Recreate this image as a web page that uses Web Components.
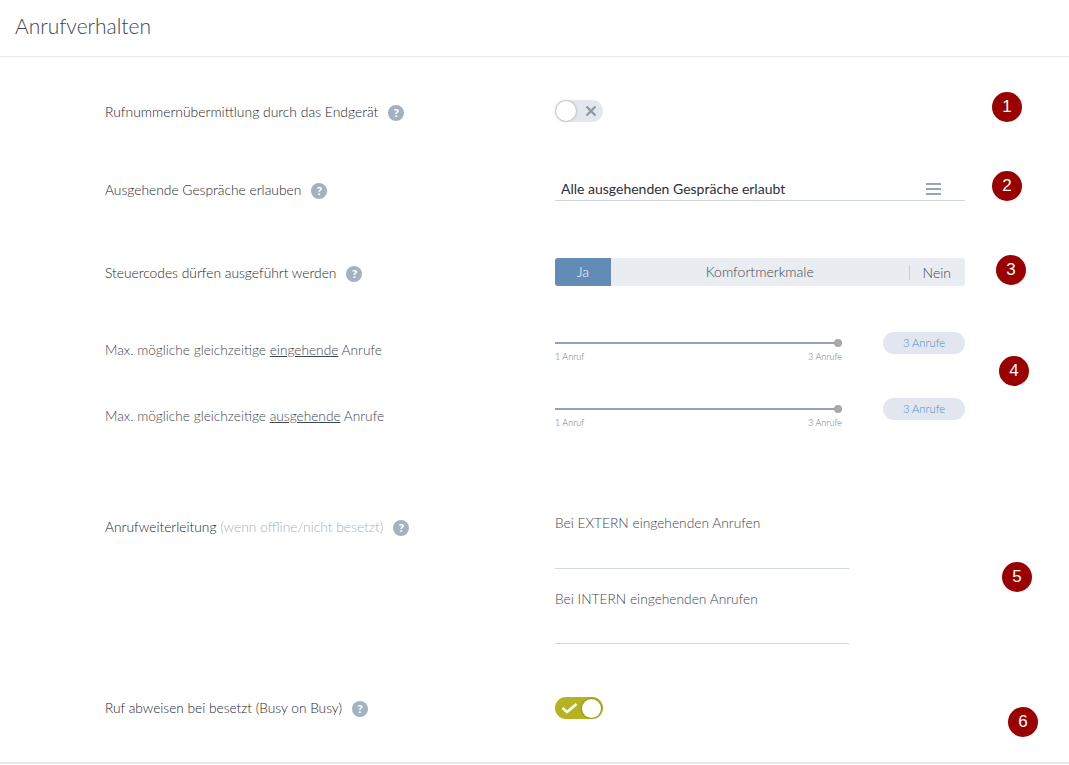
<!DOCTYPE html>
<html lang="de">
<head>
<meta charset="utf-8">
<title>Anrufverhalten</title>
<style>
  html, body { margin: 0; background: #fff; }
  body { font-family: Lato, "Liberation Sans", sans-serif; font-weight: 300; color: #3c4650; height: 765px; overflow: hidden; }
</style>
</head>
<body>
<settings-page>
  <span slot="title">Anrufverhalten</span>

  <call-row style="--top:43px;--height:22px;--label-top:4px;--size:13.9px">
    <span slot="label">Rufnummernübermittlung durch das Endgerät</span>
    <help-icon slot="label"></help-icon>
    <toggle-switch></toggle-switch>
  </call-row>

  <call-row style="--top:56px;--height:23px;--label-top:4px">
    <span slot="label">Ausgehende Gespräche erlauben</span>
    <help-icon slot="label"></help-icon>
    <select-field>Alle ausgehenden Gespräche erlaubt</select-field>
  </call-row>

  <call-row style="--top:57px;--height:28px;--label-top:7px">
    <span slot="label">Steuercodes dürfen ausgeführt werden</span>
    <help-icon slot="label"></help-icon>
    <segment-switch first="Ja" middle="Komfortmerkmale" last="Nein"></segment-switch>
  </call-row>

  <call-row muted style="--top:46px;--height:32px;--label-top:10px;--size:13.7px">
    <span slot="label">Max. mögliche gleichzeitige <u>eingehende</u> Anrufe</span>
    <range-slider></range-slider>
  </call-row>

  <call-row muted style="--top:34px;--height:32px;--label-top:10px;--size:13.7px">
    <span slot="label">Max. mögliche gleichzeitige <u>ausgehende</u> Anrufe</span>
    <range-slider></range-slider>
  </call-row>

  <call-row style="--top:85px;--height:159px;--label-top:4px">
    <span slot="label">Anrufweiterleitung <small style="font-size:inherit;color:#a9b0b6">(wenn offline/nicht besetzt)</small></span>
    <help-icon slot="label"></help-icon>
    <text-field>Bei EXTERN eingehenden Anrufen</text-field>
    <text-field>Bei INTERN eingehenden Anrufen</text-field>
  </call-row>

  <call-row style="--top:23px;--height:22px;--label-top:3px;--size:13.7px">
    <span slot="label">Ruf abweisen bei besetzt (Busy on Busy)</span>
    <help-icon slot="label"></help-icon>
    <toggle-switch checked></toggle-switch>
  </call-row>

  <note-marker style="left:992px;top:92px">1</note-marker>
  <note-marker style="left:992px;top:171px">2</note-marker>
  <note-marker style="left:996px;top:255px">3</note-marker>
  <note-marker style="left:999px;top:356px">4</note-marker>
  <note-marker style="left:1002px;top:562px">5</note-marker>
  <note-marker style="left:1008px;top:707px">6</note-marker>
</settings-page>

<script>
class SettingsPage extends HTMLElement {
    constructor() {
        super();
        this.attachShadow({ mode: 'open' });
        this.shadowRoot.innerHTML = `
            <style>
                :host { display: block; position: relative; height: 764px; box-sizing: border-box; border-bottom: 2px solid #e6e8ea; }
                header { height: 57px; box-sizing: border-box; padding: 13px 15px 0; border-bottom: 1px solid #e9ebed; font-size: 21px; line-height: 26px; color: #3c4650; }
            </style>
            <header><slot name="title"></slot></header>
            <slot></slot>
        `;
    }
}

class CallRow extends HTMLElement {
    constructor() {
        super();
        this.attachShadow({ mode: 'open' });
        this.shadowRoot.innerHTML = `
            <style>
                :host { display: grid; grid-template-columns: 450px 410px; padding: var(--top) 0 0 105px; font-size: var(--size, 13.8px); line-height: 16px; color: #1e252b; }
                :host([muted]) { color: #3e4750; }
                .label { padding-top: var(--label-top); display: flex; align-items: flex-start; gap: 10px; height: fit-content; }
                .control { min-height: var(--height); display: block; }
            </style>
            <div class="label"><slot name="label"></slot></div>
            <div class="control"><slot></slot></div>
        `;
    }
}

class HelpIcon extends HTMLElement {
    constructor() {
        super();
        this.attachShadow({ mode: 'open' });
        this.shadowRoot.innerHTML = `
            <style>
                :host { display: block; width: 16px; height: 16px; margin-top: 1px; border-radius: 50%; background: #a3b2bf; color: #fff; font: 900 12px/16px Lato, sans-serif; text-align: center; }
            </style>
            ?
        `;
    }
}

class ToggleSwitch extends HTMLElement {
    constructor() {
        super();
        this.attachShadow({ mode: 'open' });
        const on = this.hasAttribute('checked');
        this.shadowRoot.innerHTML = `
            <style>
                :host { display: flex; align-items: center; justify-content: space-between; width: 48px; height: 22px; box-sizing: border-box; padding: 0 1px; border-radius: 11px; background: #e3e7ee; }
                :host([checked]) { background: #b5b31f; padding: 0 2px 0 3px; }
                :host([checked]) .thumb { width: 19px; height: 19px; }
                :host([checked]) svg { width: 17px; margin: 0 0 0 3px; }
                .thumb { width: 20px; height: 20px; border-radius: 50%; background: #fff; box-shadow: 0 0 3px rgba(0,0,0,.35); }
                svg { width: 14px; height: 14px; margin: 0 4px; }
            </style>
            ${on
                ? `<svg viewBox="0 0 17 14"><path d="M1.5 7 6 11 15.5 3" fill="none" stroke="#fff" stroke-width="2.6"/></svg><div class="thumb"></div>`
                : `<div class="thumb"></div><svg viewBox="0 0 14 14"><path d="M2.5 2.5 11.5 11.5M11.5 2.5 2.5 11.5" fill="none" stroke="#8f979e" stroke-width="2.2"/></svg>`}
        `;
    }
}

class SelectField extends HTMLElement {
    constructor() {
        super();
        this.attachShadow({ mode: 'open' });
        this.shadowRoot.innerHTML = `
            <style>
                :host { display: flex; align-items: center; justify-content: space-between; height: 23px; box-sizing: border-box; padding: 0 24px 0 6px; border-bottom: 1px solid #cfd6da; font-size: 14px; font-weight: 400; color: #2a3036; }
                svg { width: 15px; height: 12px; }
            </style>
            <slot></slot>
            <svg viewBox="0 0 15 12"><path d="M0 1h15M0 6h15M0 11h15" stroke="#97a5b1" stroke-width="1.8"/></svg>
        `;
    }
}

class SegmentSwitch extends HTMLElement {
    constructor() {
        super();
        this.attachShadow({ mode: 'open' });
        this.shadowRoot.innerHTML = `
            <style>
                :host { display: flex; align-items: center; height: 28px; border-radius: 3px; background: #e9ecf0; overflow: hidden; font-size: 14px; color: #3e4750; }
                .first { width: 56px; align-self: stretch; display: flex; align-items: center; justify-content: center; background: #628cb6; color: #fff; }
                .middle { flex: 1; text-align: center; }
                .last { margin-right: 14px; padding-left: 13px; border-left: 1px solid #c8ced3; line-height: 15px; }
            </style>
            <div class="first">${this.getAttribute('first')}</div>
            <div class="middle">${this.getAttribute('middle')}</div>
            <div class="last">${this.getAttribute('last')}</div>
        `;
    }
}

class RangeSlider extends HTMLElement {
    constructor() {
        super();
        this.attachShadow({ mode: 'open' });
        this.shadowRoot.innerHTML = `
            <style>
                :host { display: flex; justify-content: space-between; align-items: flex-start; }
                .track { width: 287px; padding-top: 6px; }
                .line { height: 2px; background: #93a3b9; position: relative; margin-top: 4px; }
                .knob { position: absolute; right: 0; top: -3px; width: 8px; height: 8px; border-radius: 50%; background: #a9a9a9; }
                .ends { display: flex; justify-content: space-between; margin-top: 7px; font-size: 9px; line-height: 12px; color: #6e7479; }
                .pill { width: 82px; height: 22px; border-radius: 11px; background: #e2e7ef; color: #3f8bd4; font-size: 11.2px; font-weight: 300; line-height: 22px; text-align: center; }
            </style>
            <div class="track">
                <div class="line"><div class="knob"></div></div>
                <div class="ends"><span>1 Anruf</span><span>3 Anrufe</span></div>
            </div>
            <div class="pill">3 Anrufe</div>
        `;
    }
}

class TextField extends HTMLElement {
    constructor() {
        super();
        this.attachShadow({ mode: 'open' });
        this.shadowRoot.innerHTML = `
            <style>
                :host { display: block; width: 294px; height: 54px; margin-bottom: 21px; box-sizing: border-box; border-bottom: 1px solid #cfdade; font-size: 13.75px; line-height: 16px; color: #3e4750; }
                :host(:last-child) { padding-top: 1px; }
            </style>
            <slot></slot>
        `;
    }
}

class NoteMarker extends HTMLElement {
    constructor() {
        super();
        this.attachShadow({ mode: 'open' });
        this.shadowRoot.innerHTML = `
            <style>
                :host { position: absolute; width: 30px; height: 30px; border-radius: 50%; background: #990000; color: #fff; font: 400 17px/30px "Liberation Sans", sans-serif; text-align: center; }
            </style>
            <slot></slot>
        `;
    }
}

customElements.define('settings-page', SettingsPage);
customElements.define('call-row', CallRow);
customElements.define('help-icon', HelpIcon);
customElements.define('toggle-switch', ToggleSwitch);
customElements.define('select-field', SelectField);
customElements.define('segment-switch', SegmentSwitch);
customElements.define('range-slider', RangeSlider);
customElements.define('text-field', TextField);
customElements.define('note-marker', NoteMarker);
</script>
</body>
</html>
